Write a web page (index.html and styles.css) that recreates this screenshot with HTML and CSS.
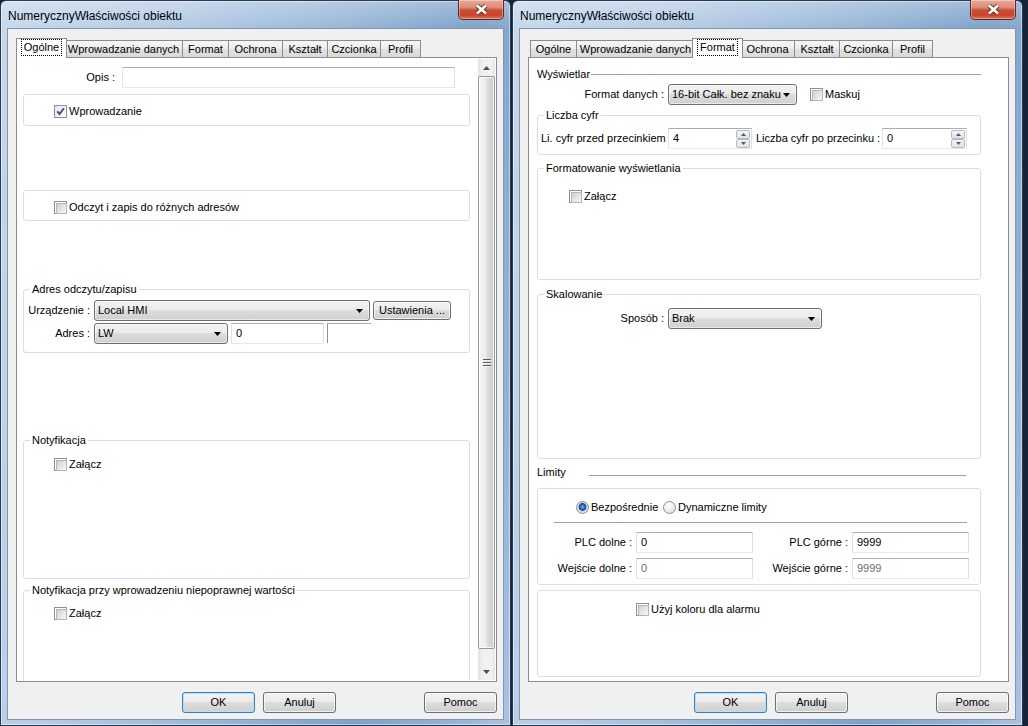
FILE: index.html
```html
<!DOCTYPE html>
<html lang="pl">
<head>
<meta charset="utf-8">
<title>NumerycznyWłaściwości obiektu</title>
<link rel="stylesheet" href="styles.css">
</head>
<body>
<div class="desktop">

  <section class="window">
    <header class="titlebar">
      <span class="title">NumerycznyWłaściwości obiektu</span>
      <span class="close"><svg width="13" height="11" viewBox="0 0 13 11"><path d="M2 1.5 L11 9.5 M11 1.5 L2 9.5" stroke="#4a2019" stroke-opacity=".75" stroke-width="4.6"/><path d="M2 1.5 L11 9.5 M11 1.5 L2 9.5" stroke="#fff" stroke-width="2.6"/></svg></span>
    </header>
    <div class="client">
      <nav class="tabs">
        <span class="tab t-ogolne sel"><span class="focus">Ogólne</span></span>
        <span class="tab t-wpr">Wprowadzanie danych</span>
        <span class="tab t-format">Format</span>
        <span class="tab t-ochr">Ochrona</span>
        <span class="tab t-ksz">Kształt</span>
        <span class="tab t-czc">Czcionka</span>
        <span class="tab t-prof">Profil</span>
      </nav>
      <div class="panel panel-scroll">
        <div class="scrollarea">
          <div class="row opis">
            <span class="lbl opis-lbl">Opis :</span>
            <span class="edit opis-edit"></span>
          </div>

          <div class="group g1">
            <label class="chk"><span class="box on"><svg width="9" height="9" viewBox="0 0 9 9"><path d="M1.2 4.3 L3.6 7 L7.9 1.2" fill="none" stroke="#3a4f86" stroke-width="1.9"/></svg></span><span>Wprowadzanie</span></label>
          </div>

          <div class="group g2">
            <label class="chk"><span class="box"></span><span>Odczyt i zapis do różnych adresów</span></label>
          </div>

          <div class="group g3">
            <span class="gtitle">Adres odczytu/zapisu</span>
            <div class="row addr-row r1">
              <span class="lbl addr-lbl">Urządzenie :</span>
              <span class="combo w-dev"><span class="val">Local HMI</span><svg class="arr" width="7" height="4" viewBox="0 0 7 4"><path d="M0 0H7L3.5 4Z"/></svg></span>
              <span class="btn small">Ustawienia ...</span>
            </div>
            <div class="row addr-row r2">
              <span class="lbl addr-lbl">Adres :</span>
              <span class="combo w-lw"><span class="val">LW</span><svg class="arr" width="7" height="4" viewBox="0 0 7 4"><path d="M0 0H7L3.5 4Z"/></svg></span>
              <span class="edit w-addr"><span class="val">0</span></span>
              <span class="stub"></span>
            </div>
          </div>

          <div class="group g4">
            <span class="gtitle">Notyfikacja</span>
            <label class="chk"><span class="box"></span><span>Załącz</span></label>
          </div>

          <div class="group g5">
            <span class="gtitle">Notyfikacja przy wprowadzeniu niepoprawnej wartości</span>
            <label class="chk"><span class="box"></span><span>Załącz</span></label>
          </div>
        </div>
        <div class="vscroll">
          <span class="sb-btn"><svg width="7" height="4" viewBox="0 0 7 4"><path d="M0 4H7L3.5 0Z" fill="#505050"/></svg></span>
          <span class="sb-thumb"><span class="grip"></span></span>
          <span class="sb-track"></span>
          <span class="sb-btn"><svg width="7" height="4" viewBox="0 0 7 4"><path d="M0 0H7L3.5 4Z" fill="#505050"/></svg></span>
        </div>
      </div>
      <div class="buttons">
        <span class="btn default">OK</span>
        <span class="btn">Anuluj</span>
        <span class="btn help">Pomoc</span>
      </div>
    </div>
  </section>

  <section class="window">
    <header class="titlebar">
      <span class="title">NumerycznyWłaściwości obiektu</span>
      <span class="close"><svg width="13" height="11" viewBox="0 0 13 11"><path d="M2 1.5 L11 9.5 M11 1.5 L2 9.5" stroke="#4a2019" stroke-opacity=".75" stroke-width="4.6"/><path d="M2 1.5 L11 9.5 M11 1.5 L2 9.5" stroke="#fff" stroke-width="2.6"/></svg></span>
    </header>
    <div class="client">
      <nav class="tabs">
        <span class="tab t-ogolne">Ogólne</span>
        <span class="tab t-wpr">Wprowadzanie danych</span>
        <span class="tab t-format sel"><span class="focus">Format</span></span>
        <span class="tab t-ochr">Ochrona</span>
        <span class="tab t-ksz">Kształt</span>
        <span class="tab t-czc">Czcionka</span>
        <span class="tab t-prof">Profil</span>
      </nav>
      <div class="panel panel-format">
        <div class="row sect wys">
          <span>Wyświetlar</span>
          <span class="hr"></span>
        </div>
        <div class="row fmt-row">
          <span class="lbl fmt-lbl">Format danych :</span>
          <span class="combo w-fmt"><span class="val">16-bit Całk. bez znaku</span><svg class="arr" width="7" height="4" viewBox="0 0 7 4"><path d="M0 0H7L3.5 4Z"/></svg></span>
          <label class="chk maskuj"><span class="box"></span><span>Maskuj</span></label>
        </div>

        <div class="group gr-digits">
          <span class="gtitle">Liczba cyfr</span>
          <div class="row digits-row">
            <span class="lbl d-lbl1">Li. cyfr przed przecinkiem</span>
            <span class="edit spin w-spin"><span class="val">4</span><span class="spinbtns"><span class="sp"><svg width="5" height="3" viewBox="0 0 5 3"><path d="M0 3H5L2.5 0Z" fill="#4d5b6e"/></svg></span><span class="sp"><svg width="5" height="3" viewBox="0 0 5 3"><path d="M0 0H5L2.5 3Z" fill="#4d5b6e"/></svg></span></span></span>
            <span class="lbl d-lbl2">Liczba cyfr po przecinku :</span>
            <span class="edit spin w-spin2"><span class="val">0</span><span class="spinbtns"><span class="sp"><svg width="5" height="3" viewBox="0 0 5 3"><path d="M0 3H5L2.5 0Z" fill="#4d5b6e"/></svg></span><span class="sp"><svg width="5" height="3" viewBox="0 0 5 3"><path d="M0 0H5L2.5 3Z" fill="#4d5b6e"/></svg></span></span></span>
          </div>
        </div>

        <div class="group gr-form">
          <span class="gtitle">Formatowanie wyświetlania</span>
          <label class="chk"><span class="box"></span><span>Załącz</span></label>
        </div>

        <div class="group gr-scale">
          <span class="gtitle">Skalowanie</span>
          <div class="row scale-row">
            <span class="lbl sc-lbl">Sposób :</span>
            <span class="combo w-brak"><span class="val">Brak</span><svg class="arr" width="7" height="4" viewBox="0 0 7 4"><path d="M0 0H7L3.5 4Z"/></svg></span>
          </div>
        </div>

        <div class="row limity">
          <span>Limity</span>
          <span class="hr lim-hr"></span>
        </div>

        <div class="group gr-lim">
          <div class="row radios">
            <label class="opt opt1"><span class="radio on"></span><span>Bezpośrednie</span></label>
            <label class="opt"><span class="radio"></span><span>Dynamiczne limity</span></label>
          </div>
          <span class="hr lim-sep"></span>
          <div class="row lim-row">
            <span class="lbl lim-lbl">PLC dolne :</span>
            <span class="edit w-lim"><span class="val">0</span></span>
            <span class="lbl lim-lbl">PLC górne :</span>
            <span class="edit w-lim"><span class="val">9999</span></span>
          </div>
          <div class="row lim-row r2">
            <span class="lbl lim-lbl">Wejście dolne :</span>
            <span class="edit w-lim dis"><span class="val">0</span></span>
            <span class="lbl lim-lbl">Wejście górne :</span>
            <span class="edit w-lim dis"><span class="val">9999</span></span>
          </div>
        </div>

        <div class="group gr-alarm">
          <label class="chk"><span class="box"></span><span>Użyj koloru dla alarmu</span></label>
        </div>
      </div>
      <div class="buttons">
        <span class="btn default">OK</span>
        <span class="btn">Anuluj</span>
        <span class="btn help">Pomoc</span>
      </div>
    </div>
  </section>

</div>
</body>
</html>
```

FILE: styles.css
```css
* { box-sizing: border-box; }
html, body { margin: 0; padding: 0; }
body {
  width: 1028px;
  height: 726px;
  overflow: hidden;
  background: #16243a;
  font-family: "Liberation Sans", Arial, sans-serif;
  font-size: 11px;
  line-height: 13px;
  color: #000;
}
.desktop { display: flex; gap: 1px; height: 726px; }

/* ---------- window frame ---------- */
.window {
  width: 511px;
  height: 726px;
  flex: none;
  display: flex;
  flex-direction: column;
  border: 1px solid #2a3a52;
  border-radius: 6px 6px 0 0;
  padding: 0 6px 5px;
  background:
    linear-gradient(to bottom, rgba(255,255,255,.28), rgba(255,255,255,0) 28px),
    linear-gradient(100deg, #c5d8ec 0%, #b6cde6 25%, #9dbad9 50%, #7fa2c9 75%, #93b1d3 90%, #aac4e0 100%);
  box-shadow: inset 0 0 0 1px rgba(255,255,255,.45);
}
.titlebar { height: 27px; flex: none; display: flex; align-items: flex-start; }
.title { font-size: 12px; line-height: 14px; margin: 8px 0 0 1px; color: #000; }
.close {
  margin: -1px 0 0 auto;
  width: 46px;
  height: 20px;
  border: 1px solid #5e2820;
  border-top: none;
  border-radius: 0 0 5px 5px;
  background: linear-gradient(#e9aa9c 0%, #dc8a78 40%, #c8503a 52%, #c9442b 80%, #dd7456 100%);
  box-shadow: inset 0 0 0 1px rgba(255,255,255,.35);
  display: flex;
  align-items: center;
  justify-content: center;
}
.close svg { display: block; }

.client {
  flex: 1;
  display: flex;
  flex-direction: column;
  background: #f0f0f0;
  border: 1px solid #8396b1;
  padding: 9px 6px 0 8px;
}

/* ---------- tabs ---------- */
.tabs { display: flex; align-items: flex-end; height: 19px; padding-left: 2px; flex: none; }
.tab {
  width: var(--w);
  height: 17px;
  margin-left: -1px;
  border: 1px solid #898c95;
  border-bottom: none;
  background: linear-gradient(#f6f6f6, #ececec 50%, #e1e1e1 50%, #dadada);
  display: flex;
  justify-content: center;
  padding-top: 2px;
  white-space: nowrap;
}
.tab:first-child { margin-left: 0; }
.tab.sel {
  width: calc(var(--w) + 4px);
  height: 20px;
  margin: 0 -2px -1px -3px;
  background: #fff;
  position: relative;
  z-index: 1;
  padding-top: 1px;
}
.tab.sel:first-child { margin-left: -2px; }
.focus { outline: 1px dotted #000; padding: 0 2px; height: 15px; line-height: 15px; }
.t-ogolne { --w: 47px; }
.t-wpr { --w: 119px; }
.t-format { --w: 47px; }
.t-ochr { --w: 55px; }
.t-ksz { --w: 46px; }
.t-czc { --w: 54px; }
.t-prof { --w: 41px; }

/* ---------- panel ---------- */
.panel {
  height: 625px;
  flex: none;
  border: 1px solid #898c95;
  background: #fff;
}
.panel-scroll { display: flex; }
.scrollarea { flex: 1; overflow: hidden; padding: 0 8px 0 6px; }

.vscroll {
  width: 17px;
  margin: 1px 1px 1px 0;
  display: flex;
  flex-direction: column;
  background: linear-gradient(to right, #e2e2e2, #f0f0f0 25%, #f2f2f2 75%, #e6e6e6);
}
.sb-btn { height: 17px; flex: none; display: flex; align-items: center; justify-content: center; }
.sb-btn svg { display: block; }
.sb-thumb {
  height: 573px;
  flex: none;
  border: 1px solid #979797;
  border-radius: 2px;
  background: linear-gradient(to right, #f5f5f5, #ececec 45%, #dcdcdc 55%, #cdcdcd);
  box-shadow: inset 0 0 0 1px rgba(255,255,255,.7);
  display: flex;
  align-items: center;
  justify-content: center;
}
.grip {
  width: 8px;
  height: 8px;
  background: repeating-linear-gradient(#5a5a5a 0 1px, #f4f4f4 1px 2px, transparent 2px 3px);
}
.sb-track { flex: 1; }

/* ---------- generic controls ---------- */
.row { display: flex; align-items: center; }
.lbl { white-space: nowrap; flex: none; }
.edit {
  height: 21px;
  flex: none;
  border: 1px solid;
  border-color: #abadb3 #dbdfe6 #e3e9ef #e2e3ea;
  background: #fff;
  display: flex;
  align-items: center;
  padding-left: 4px;
}
.edit.dis { color: #6d6d6d; }
.combo {
  height: 21px;
  flex: none;
  border: 1px solid #707070;
  border-radius: 3px;
  background: linear-gradient(#f2f2f2 0%, #ebebeb 49%, #dddddd 50%, #cfcfcf 100%);
  box-shadow: inset 0 0 0 1px rgba(255,255,255,.55);
  display: flex;
  align-items: center;
  padding: 0 6px 0 3px;
  overflow: hidden;
}
.combo .val { flex: 1; white-space: nowrap; overflow: hidden; }
.combo .arr { flex: none; display: block; margin-left: 2px; }
.btn {
  width: 73px;
  height: 21px;
  flex: none;
  border: 1px solid #707070;
  border-radius: 3px;
  background: linear-gradient(#f2f2f2 0%, #ebebeb 49%, #dddddd 50%, #cfcfcf 100%);
  box-shadow: inset 0 0 0 1px rgba(255,255,255,.7);
  display: flex;
  align-items: center;
  justify-content: center;
  white-space: nowrap;
}
.btn.default { border-color: #3c7fb1; box-shadow: inset 0 0 0 1px #b8e0f7; }
.btn.small { width: 78px; height: 19px; }

.chk { display: flex; align-items: center; gap: 2px; height: 13px; white-space: nowrap; }
.box {
  width: 13px;
  height: 13px;
  flex: none;
  border: 1px solid #8e8f8f;
  background: #fff;
  padding: 1px;
}
.box::before {
  content: "";
  display: block;
  width: 9px;
  height: 9px;
  border: 1px solid #b2b6bb;
  background: linear-gradient(135deg, #cdd1d7, #f7f7f7);
}
.box.on::before { display: none; }
.box.on { background: linear-gradient(135deg, #e3e6ea, #fdfdfd); }
.box.on svg { display: block; }

.radio {
  width: 13px;
  height: 13px;
  flex: none;
  border-radius: 50%;
  border: 1px solid #8e8f8f;
  background: radial-gradient(circle at 40% 35%, #ffffff, #ebebeb 55%, #cfd1d4);
}
.radio.on {
  background: radial-gradient(circle at 50% 45%, #8fd0ff 0, #2f7fd0 1.5px, #0f4a8f 3.5px, #d6d6d6 4.2px, #f2f2f2 100%);
}
.opt { display: flex; align-items: center; gap: 2px; white-space: nowrap; }

.hr { display: block; height: 1px; background: #a0a0a0; }

.group {
  flex: none;
  border: 1px solid #d5dfe5;
  border-radius: 3px;
}
.gtitle {
  display: table;
  margin: -7px 0 0 6px;
  padding: 0 2px;
  background: #fff;
  line-height: 13px;
  white-space: nowrap;
}

/* ---------- left window content ---------- */
.opis { margin-top: 9px; height: 21px; }
.opis-lbl { width: 92px; text-align: right; }
.opis-edit { width: 333px; margin-left: 7px; }

.g1 { margin-top: 6px; height: 32px; padding: 10px 0 0 30px; }
.g2 { margin-top: 64px; height: 31px; padding: 10px 0 0 30px; }
.g3 { margin-top: 68px; height: 64px; }
.g3 .r1 { margin-top: 4px; }
.g3 .r2 { margin-top: 2px; }
.addr-row { height: 21px; gap: 3px; }
.addr-lbl { width: 66px; text-align: right; margin-right: 1px; }
.w-dev { width: 276px; }
.w-lw { width: 134px; }
.w-addr { width: 93px; }
.stub {
  width: 44px;
  height: 20px;
  flex: none;
  align-self: flex-start;
  border-top: 1px solid #a8aab0;
  border-left: 1px solid #8f9196;
}
.g4 { margin-top: 87px; height: 139px; padding-left: 30px; }
.g4 .gtitle { margin-left: -24px; }
.g4 .chk { margin-top: 11px; }
.g5 { margin-top: 11px; height: 100px; padding-left: 30px; }
.g5 .gtitle { margin-left: -24px; }
.g5 .chk { margin-top: 10px; }

/* ---------- right window content ---------- */
.panel-format { padding: 0 0 0 8px; }
.wys { margin-top: 10px; height: 13px; width: 444px; }
.wys .hr { flex: 1; margin-left: 1px; }
.fmt-row { margin-top: 3px; height: 21px; }
.fmt-lbl { width: 127px; text-align: right; margin-right: 4px; }
.w-fmt { width: 129px; }
.maskuj { margin-left: 13px; }

.gr-digits { margin-top: 10px; width: 444px; height: 40px; }
.digits-row { margin-top: 6px; height: 21px; padding-left: 3px; gap: 4px; }
.d-lbl1 { width: 123px; }
.d-lbl2 { width: 122px; }
.spin { padding-right: 1px; }
.spin .val { flex: 1; }
.w-spin { width: 84px; }
.w-spin2 { width: 85px; }
.spinbtns { display: flex; flex-direction: column; width: 14px; height: 18px; gap: 0; }
.sp {
  flex: 1;
  border: 1px solid #b6bbc3;
  border-radius: 2px;
  background: linear-gradient(#f4f4f4, #e2e2e2);
  display: flex;
  align-items: center;
  justify-content: center;
}
.sp svg { display: block; }

.gr-form { margin-top: 13px; width: 444px; height: 112px; }
.gr-form .chk { margin: 15px 0 0 31px; }

.gr-scale { margin-top: 14px; width: 444px; height: 165px; }
.scale-row { margin-top: 7px; height: 21px; }
.sc-lbl { width: 126px; text-align: right; margin-right: 4px; }
.w-brak { width: 154px; }

.limity { margin-top: 7px; height: 13px; width: 429px; align-items: flex-start; }
.lim-hr { flex: 1; margin: 9px 0 0 23px; }

.gr-lim { margin-top: 9px; width: 444px; height: 97px; padding-top: 12px; }
.radios { padding-left: 38px; height: 13px; }
.opt1 { width: 87px; }
.lim-sep { margin: 8px 0 0 16px; width: 413px; }
.lim-row { margin-top: 9px; height: 21px; }
.lim-row.r2 { margin-top: 5px; }
.lim-lbl { width: 94px; text-align: right; margin-right: 4px; }
.w-lim { width: 117px; }
.w-lim + .lim-lbl { width: 95px; }

.gr-alarm { margin-top: 5px; width: 444px; height: 87px; padding: 12px 0 0 98px; }

/* ---------- bottom buttons ---------- */
.buttons { display: flex; gap: 8px; margin-top: 10px; height: 21px; padding-left: 166px; flex: none; }
.btn.help { margin-left: auto; }
```
